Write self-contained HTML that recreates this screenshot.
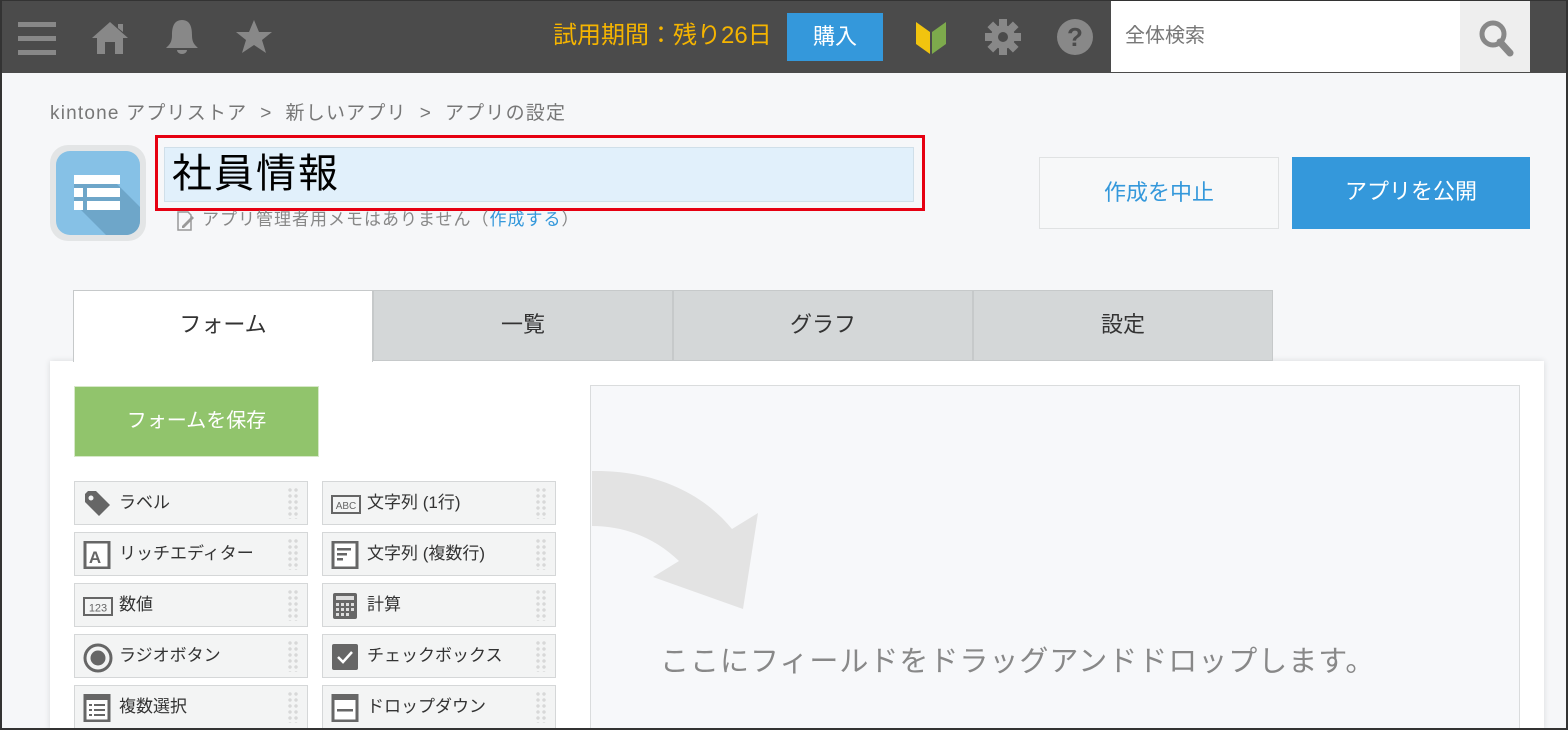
<!DOCTYPE html>
<html style="overflow:hidden"><head><meta charset="utf-8"><style>
*{box-sizing:border-box;margin:0;padding:0}
html,body{width:1568px;height:730px;overflow:hidden}
body{background:#f6f7f9;font-family:"Liberation Sans","Noto Sans CJK JP",sans-serif;position:relative;}
.abs{position:absolute}
.hdr{left:0;top:0;width:1568px;height:73px;background:#4b4b4b}
.fi{position:absolute;width:234px;height:44px;background:#f3f4f4;border:1px solid #d5d7d8;font-size:17px;color:#333;line-height:42px;padding-left:44px}
.fi .dr{position:absolute;right:8px;top:5px;width:12px;height:32px;background-image:radial-gradient(circle,#d8d8d8 1.5px,transparent 2px);background-size:6px 6px}
.fi svg{position:absolute;left:8px;top:8px}
.tab{position:absolute;top:290px;height:71px;width:300px;background:#d4d7d8;border:1px solid #c6c9ca;text-align:center;line-height:68px;font-size:22px;color:#333}
</style></head><body>
<div class="abs hdr"></div>
<div class="abs" style="left:18px;top:22px;width:38px;height:5px;background:#888"></div>
<div class="abs" style="left:18px;top:36px;width:38px;height:5px;background:#888"></div>
<div class="abs" style="left:18px;top:50px;width:38px;height:5px;background:#888"></div>
<svg class="abs" style="left:90px;top:20px" width="40" height="36" viewBox="0 0 40 36"><path d="M20 2 L38 18 H33 V34 H25 V22 H15 V34 H7 V18 H2 Z M28 4 H33 V12 L28 8Z" fill="#888"/></svg>
<svg class="abs" style="left:163px;top:17px" width="38" height="40" viewBox="0 0 38 40"><path d="M19 3 C11 3 9 10 9 18 C9 26 6 28 3 31 H35 C32 28 29 26 29 18 C29 10 27 3 19 3Z M14 33 H24 A5 4 0 0 1 14 33Z" fill="#888"/></svg>
<svg class="abs" style="left:235px;top:18px" width="38" height="38" viewBox="0 0 38 38"><path d="M19 2 L24 14 H37 L27 22 L31 35 L19 27 L7 35 L11 22 L1 14 H14Z" fill="#888"/></svg>
<div class="abs" style="left:553px;top:20px;font-size:24px;color:#f5b400;line-height:32px">試用期間：残り26日</div>
<div class="abs" style="left:787px;top:13px;width:96px;height:48px;background:#3498db;color:#fff;font-size:22px;text-align:center;line-height:48px">購入</div>
<svg class="abs" style="left:914px;top:18px" width="34" height="38" viewBox="0 0 34 38"><path d="M2 4 L16 14 V36 L2 26Z" fill="#f1c40f"/><path d="M32 4 L18 14 V36 L32 26Z" fill="#7daa4c"/></svg>
<svg class="abs" style="left:984px;top:18px" width="38" height="38" viewBox="0 0 38 38"><g fill="#888"><circle cx="19" cy="19" r="12"/><rect x="15" y="1" width="8" height="36"/><rect x="1" y="15" width="36" height="8"/><rect x="15" y="1" width="8" height="36" transform="rotate(45 19 19)"/><rect x="15" y="1" width="8" height="36" transform="rotate(-45 19 19)"/></g><circle cx="19" cy="19" r="5" fill="#4b4b4b"/></svg>
<svg class="abs" style="left:1056px;top:18px" width="38" height="38" viewBox="0 0 38 38"><circle cx="19" cy="19" r="18" fill="#888"/><text x="19" y="28" font-size="26" font-weight="bold" text-anchor="middle" fill="#4b4b4b" font-family="Liberation Sans">?</text></svg>
<div class="abs" style="left:1111px;top:0;width:350px;height:72px;background:#fff;font-size:20px;color:#777;line-height:72px;padding-left:14px">全体検索</div>
<div class="abs" style="left:1460px;top:0;width:70px;height:72px;background:#eee"></div>
<svg class="abs" style="left:1476px;top:18px" width="40" height="40" viewBox="0 0 40 40"><circle cx="17" cy="16" r="11" fill="none" stroke="#888" stroke-width="5"/><path d="M24 24 L34 35" stroke="#888" stroke-width="7" stroke-linecap="round"/></svg>

<div class="abs" style="left:50px;top:102px;font-size:19px;color:#777;line-height:24px;letter-spacing:1.2px;white-space:nowrap">kintone アプリストア &nbsp;&gt;&nbsp; 新しいアプリ &nbsp;&gt;&nbsp; アプリの設定</div>
<div class="abs" style="left:50px;top:145px;width:96px;height:96px;border-radius:18px;background:#e3e5e6"></div>
<svg class="abs" style="left:56px;top:151px" width="84" height="84" viewBox="0 0 84 84"><defs><clipPath id="c"><rect width="84" height="84" rx="14"/></clipPath></defs><g clip-path="url(#c)"><rect width="84" height="84" fill="#86c1e6"/><path d="M18 28 L56 28 L84 56 L84 84 L50 84 L18 52Z" fill="#6ea6c9"/><g fill="#fff"><rect x="18" y="24" width="46" height="9"/><rect x="18" y="37" width="9" height="9"/><rect x="31" y="37" width="33" height="9"/><rect x="18" y="50" width="9" height="9"/><rect x="31" y="50" width="33" height="9"/></g></g></svg>
<div class="abs" style="left:155px;top:135px;width:770px;height:76px;border:3px solid #e60012"></div>
<div class="abs" style="left:164px;top:147px;width:750px;height:55px;background:#e1f0fb;border:1px solid #d0dfe9;font-size:40px;line-height:52px;padding-left:7px;color:#000;letter-spacing:2px">社員情報</div>
<svg class="abs" style="left:176px;top:210px" width="20" height="22" viewBox="0 0 20 22"><path d="M2 2 H12 L15 5 V20 H2Z" fill="none" stroke="#999" stroke-width="1.5"/><path d="M6 16 L16 6 L18 8 L8 18 H6Z" fill="#999"/></svg>
<div class="abs" style="left:202px;top:208px;font-size:17px;color:#888;line-height:24px;letter-spacing:1px;white-space:nowrap">アプリ管理者用メモはありません（<span style="color:#3498db">作成する</span>）</div>
<div class="abs" style="left:1039px;top:157px;width:240px;height:72px;border:1px solid #e0e2e3;background:#f7f8f9;color:#3498db;font-size:22px;text-align:center;line-height:70px">作成を中止</div>
<div class="abs" style="left:1292px;top:157px;width:238px;height:72px;background:#3498db;color:#fff;font-size:22px;text-align:center;line-height:70px">アプリを公開</div>

<div class="abs" style="left:50px;top:361px;width:1494px;height:369px;background:#fff;box-shadow:0 0 6px rgba(0,0,0,0.12)"></div>
<div class="tab" style="left:73px;background:#fff;border-bottom:none;height:72px">フォーム</div>
<div class="tab" style="left:373px">一覧</div>
<div class="tab" style="left:673px">グラフ</div>
<div class="tab" style="left:973px">設定</div>

<div class="abs" style="left:74px;top:386px;width:245px;height:71px;background:#91c46c;border:1px solid #d6e8c8;color:#fff;font-size:20px;text-align:center;line-height:69px">フォームを保存</div>

<div class="fi" style="left:74px;top:481px"><svg width="28" height="28" viewBox="0 0 28 28"><path d="M2 4 V12 L16 26 L27 15 L13 1 H5Z" fill="#666"/><circle cx="8" cy="8" r="2.5" fill="#f3f4f4"/></svg>ラベル<div class="dr"></div></div>
<div class="fi" style="left:322px;top:481px"><svg width="30" height="28" viewBox="0 0 30 28"><rect x="1" y="6" width="28" height="17" fill="none" stroke="#666" stroke-width="2"/><text x="15" y="19" font-size="10" text-anchor="middle" fill="#666" font-family="Liberation Sans">ABC</text></svg>文字列 (1行)<div class="dr"></div></div>
<div class="fi" style="left:74px;top:532px"><svg width="28" height="28" viewBox="0 0 28 28"><rect x="2" y="1" width="24" height="26" fill="#fff" stroke="#666" stroke-width="3"/><text x="12" y="22" font-size="17" font-weight="bold" text-anchor="middle" fill="#666" font-family="Liberation Sans">A</text></svg>リッチエディター<div class="dr"></div></div>
<div class="fi" style="left:322px;top:532px"><svg width="28" height="28" viewBox="0 0 28 28"><rect x="2" y="1" width="24" height="26" fill="#fff" stroke="#666" stroke-width="3"/><rect x="6" y="7" width="14" height="2.5" fill="#666"/><rect x="6" y="12" width="10" height="2.5" fill="#666"/><rect x="6" y="17" width="6" height="2.5" fill="#666"/></svg>文字列 (複数行)<div class="dr"></div></div>
<div class="fi" style="left:74px;top:583px"><svg width="30" height="28" viewBox="0 0 30 28"><rect x="1" y="6" width="28" height="17" fill="none" stroke="#666" stroke-width="2"/><text x="15" y="19.5" font-size="11" text-anchor="middle" fill="#666" font-family="Liberation Sans">123</text></svg>数値<div class="dr"></div></div>
<div class="fi" style="left:322px;top:583px"><svg width="28" height="28" viewBox="0 0 28 28"><rect x="2" y="1" width="24" height="26" rx="2" fill="#666"/><rect x="5" y="4" width="18" height="4" fill="#ddd"/><g fill="#ddd"><rect x="5" y="11" width="3" height="3"/><rect x="10" y="11" width="3" height="3"/><rect x="15" y="11" width="3" height="3"/><rect x="20" y="11" width="3" height="3"/><rect x="5" y="16" width="3" height="3"/><rect x="10" y="16" width="3" height="3"/><rect x="15" y="16" width="3" height="3"/><rect x="20" y="16" width="3" height="3"/><rect x="5" y="21" width="3" height="3"/><rect x="10" y="21" width="3" height="3"/><rect x="15" y="21" width="3" height="3"/></g></svg>計算<div class="dr"></div></div>
<div class="fi" style="left:74px;top:634px"><svg width="30" height="30" viewBox="0 0 30 30"><circle cx="15" cy="15" r="13" fill="none" stroke="#666" stroke-width="3"/><circle cx="15" cy="15" r="7.5" fill="#666"/></svg>ラジオボタン<div class="dr"></div></div>
<div class="fi" style="left:322px;top:634px"><svg width="28" height="28" viewBox="0 0 28 28"><rect x="1" y="1" width="26" height="26" rx="2" fill="#666"/><path d="M7 14 L12 19 L21 9" fill="none" stroke="#fff" stroke-width="2.5"/></svg>チェックボックス<div class="dr"></div></div>
<div class="fi" style="left:74px;top:685px"><svg width="28" height="28" viewBox="0 0 28 28"><rect x="2" y="1" width="24" height="26" fill="#fff" stroke="#666" stroke-width="3"/><rect x="2" y="1" width="24" height="5" fill="#666"/><g fill="#666"><rect x="6" y="10" width="3" height="2"/><rect x="11" y="10" width="11" height="2"/><rect x="6" y="15" width="3" height="2"/><rect x="11" y="15" width="11" height="2"/><rect x="6" y="20" width="3" height="2"/><rect x="11" y="20" width="11" height="2"/></g></svg>複数選択<div class="dr"></div></div>
<div class="fi" style="left:322px;top:685px"><svg width="28" height="28" viewBox="0 0 28 28"><rect x="2" y="1" width="24" height="26" fill="#fff" stroke="#666" stroke-width="3"/><rect x="2" y="1" width="24" height="5" fill="#666"/><rect x="6" y="15" width="16" height="2.5" fill="#666"/></svg>ドロップダウン<div class="dr"></div></div>

<div class="abs" style="left:590px;top:385px;width:930px;height:345px;background:#f7f8fa;border:1px solid #dadcdd;border-bottom:none"></div>
<svg class="abs" style="left:591px;top:460px" width="180" height="160" viewBox="591 460 180 160"><path d="M592 471 C650 470 700 490 732 529 L758 513 L743 609 L653 577 L679 561 C655 538 625 526 592 526Z" fill="#e3e3e3"/></svg>
<div class="abs" style="left:660px;top:642px;font-size:29px;color:#888;line-height:40px;letter-spacing:1px;white-space:nowrap">ここにフィールドをドラッグアンドドロップします。</div>
<div class="abs" style="left:0;top:0;width:1568px;height:730px;border:2px solid #333;border-top-width:1px"></div>
</body></html>
